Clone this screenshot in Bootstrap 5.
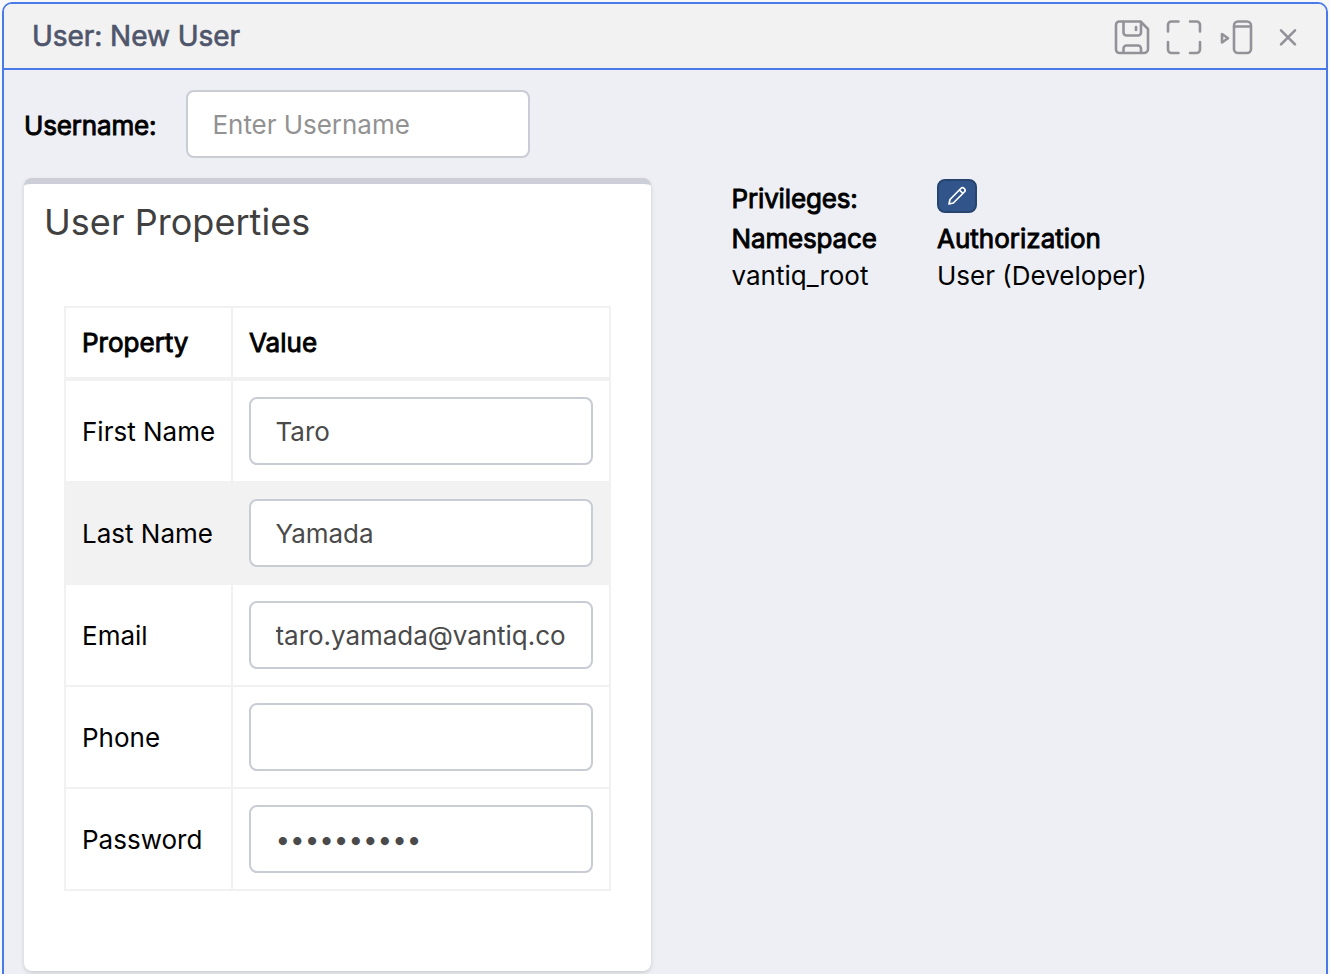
<!DOCTYPE html>
<html lang="en">
<head>
<meta charset="utf-8">
<title>User: New User</title>
<meta name="viewport" content="width=device-width, initial-scale=1">
<link href="https://cdn.jsdelivr.net/npm/bootstrap@5.3.0/dist/css/bootstrap.min.css" rel="stylesheet">
<style>
body { font-family: Inter, "Liberation Sans", sans-serif; font-size: 26px; line-height: 36px; color: #000; background: #f7f8fa; height: 974px; overflow: hidden; }
.pane { margin: 2px 2px 0; height: 1000px; border: 2px solid #4a7ae8; border-radius: 10px; background: #edeff4; overflow: hidden; }
.pane-head { height: 66px; background: #f2f2f2; border-bottom: 2px solid #4a7ae8; padding-left: 28px; color: #4f566b; font-size: 28px; }
.heavy { -webkit-text-stroke: .9px currentColor; font-weight: 400; }
.tight { letter-spacing: -.15px; }
.pane-head .heavy { -webkit-text-stroke-width: .7px; letter-spacing: -.05px; }
.tools { color: #929298; padding: 2px 28px 0 0; }
.field { width: 344px; height: 68px; border: 2px solid #c9ccd5; border-radius: 8px; padding: 0 24px 0 24.5px; font-size: 26px; color: #4a4a4a; background: #fff; letter-spacing: -.04px; }
.field::placeholder { color: #929292; opacity: 1; }
.user-row { padding: 20px 20px 0; height: 108px; }
.user-row label { width: 162px; padding-top: 18px; }
.props { width: 627px; height: 793px; border: 0; border-top: 6px solid #ccced8; border-radius: 8px; box-shadow: 0 2px 4px rgba(0,0,0,.14); margin-left: 20px; }
.props h2 { font-size: 36px; line-height: 44px; font-weight: 400; color: #404040; margin: 16px 0 0 20px; letter-spacing: .04px; }
.grid-table { width: 547px; margin: 62px 0 0 40px; border-collapse: separate; border-spacing: 0; border-top: 2px solid #f1f1f1; border-left: 2px solid #f1f1f1; table-layout: fixed; }
.grid-table th, .grid-table td { border-right: 2px solid #f1f1f1; border-bottom: 2px solid #f1f1f1; padding: 0 16px; height: 102px; vertical-align: middle; white-space: nowrap; }
.grid-table td:first-child { padding-top: 2px; }
.grid-table th { height: 73px; border-bottom-width: 4px; }
.grid-table th:first-child { width: 167px; }
.grid-table .striped td { background: #f2f2f2; }
.privs { margin-left: 80.5px; grid-template-columns: 205.5px auto; grid-template-rows: 43px 37px 37px; }
.privs-title { padding-top: 3px; }
.edit-btn { width: 40px; height: 34px; background: #31548a; border: 2px solid #27446e; border-radius: 8px; margin-top: 1px; }
</style>
</head>
<body>
<main class="pane">
  <header class="pane-head d-flex align-items-center justify-content-between">
    <span class="heavy">User: New User</span>
    <div class="tools d-flex align-items-center">
      <svg width="186" height="40" viewBox="1112 17 186 40" fill="none" stroke="currentColor" stroke-width="2.6" stroke-linecap="round" stroke-linejoin="round">
        <path d="M1119.5 21.5h21l7.5 7.5v20a4 4 0 0 1-4 4h-24.500a3.500 3.500 0 0 1-3.500-3.500v-24.500a3.500 3.500 0 0 1 3.500-3.500z"/>
        <path d="M1123.500 22v10.500a3 3 0 0 0 3 3h11.500a3 3 0 0 0 3-3v-10.500M1136 27v3M1123.500 52v-3.500a3 3 0 0 1 3-3h11.500a3 3 0 0 1 3 3v3.500"/>
        <path d="M1168 31.500v-6.500a3.500 3.500 0 0 1 3.500-3.500h7M1190 21.500h6.500a3.500 3.500 0 0 1 3.500 3.500v6.500M1200 42v7.500a3.500 3.500 0 0 1-3.500 3.500h-6.500M1178.500 53h-7a3.500 3.500 0 0 1-3.500-3.500v-7.500"/>
        <rect x="1234" y="21.500" width="17" height="31.500" rx="4"/><path d="M1234.500 26.500h16M1222 34v8.500l6-4.300z"/>
        <path d="M1281 30.300l14 14M1295 30.300l-14 14"/>
      </svg>
    </div>
  </header>
  <div class="user-row d-flex">
    <label class="heavy tight" for="username">Username:</label>
    <input id="username" class="field" type="text" placeholder="Enter Username">
  </div>
  <div class="d-flex align-items-start">
    <section class="props card">
      <h2>User Properties</h2>
      <table class="grid-table">
        <thead><tr><th class="heavy">Property</th><th class="heavy">Value</th></tr></thead>
        <tbody>
          <tr><td>First Name</td><td><input class="field d-block" value="Taro"></td></tr>
          <tr class="striped"><td>Last Name</td><td><input class="field d-block" value="Yamada"></td></tr>
          <tr><td>Email</td><td><input class="field d-block" value="taro.yamada@vantiq.co"></td></tr>
          <tr><td>Phone</td><td><input class="field d-block" value=""></td></tr>
          <tr><td>Password</td><td><input class="field d-block" type="password" value="abcdefghij"></td></tr>
        </tbody>
      </table>
    </section>
    <section class="privs d-grid">
      <span class="heavy tight privs-title">Privileges:</span>
      <button class="edit-btn btn p-0 d-flex align-items-center justify-content-center" aria-label="Edit">
        <svg width="20" height="20" viewBox="0 0 20 20" fill="none" stroke="#fff" stroke-width="1.7" stroke-linejoin="round"><path d="M2 18l1-4.500 10.800-11a2.400 2.400 0 0 1 3.500 3.500l-11 11zM12.500 4l3.500 3.500"/></svg>
      </button>
      <span class="heavy tight">Namespace</span><span class="heavy">Authorization</span>
      <span>vantiq_root</span><span>User (Developer)</span>
    </section>
  </div>
</main>
<script src="https://cdn.jsdelivr.net/npm/bootstrap@5.3.0/dist/js/bootstrap.bundle.min.js"></script>
</body>
</html>
